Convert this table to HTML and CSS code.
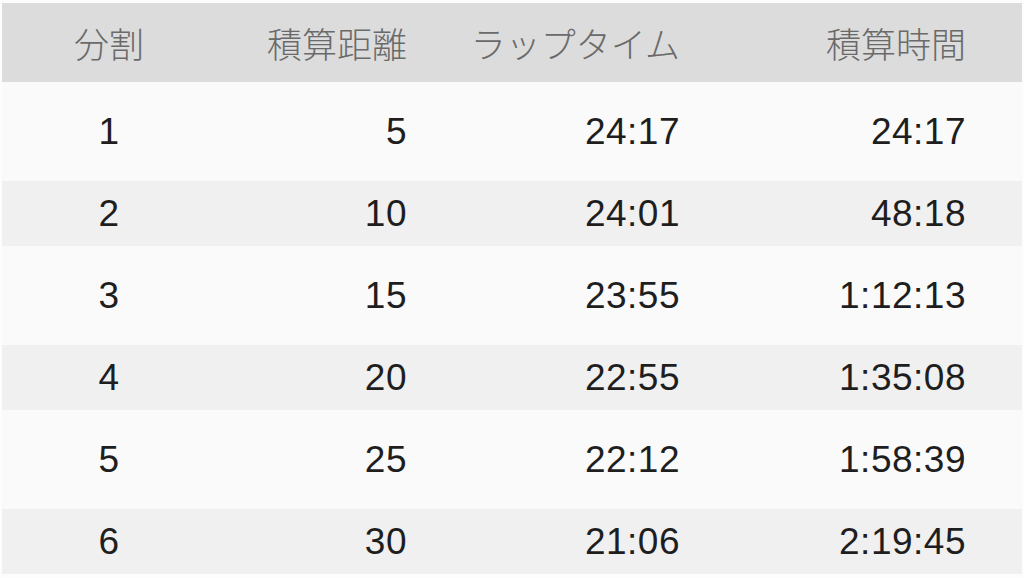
FILE: index.html
```html
<!DOCTYPE html>
<html lang="ja">
<head>
<meta charset="utf-8">
<title>ラップ</title>
<link rel="stylesheet" href="styles.css">
</head>
<body>
<div class="table">
  <div class="row head">
    <div class="c1">分割</div>
    <div class="c2">積算距離</div>
    <div class="c3">ラップタイム</div>
    <div class="c4">積算時間</div>
  </div>
  <div class="row tall">
    <div class="c1">1</div><div class="c2">5</div><div class="c3">24:17</div><div class="c4">24:17</div>
  </div>
  <div class="row short">
    <div class="c1">2</div><div class="c2">10</div><div class="c3">24:01</div><div class="c4">48:18</div>
  </div>
  <div class="row tall">
    <div class="c1">3</div><div class="c2">15</div><div class="c3">23:55</div><div class="c4">1:12:13</div>
  </div>
  <div class="row short">
    <div class="c1">4</div><div class="c2">20</div><div class="c3">22:55</div><div class="c4">1:35:08</div>
  </div>
  <div class="row tall">
    <div class="c1">5</div><div class="c2">25</div><div class="c3">22:12</div><div class="c4">1:58:39</div>
  </div>
  <div class="row short">
    <div class="c1">6</div><div class="c2">30</div><div class="c3">21:06</div><div class="c4">2:19:45</div>
  </div>
</div>
</body>
</html>
```
FILE: styles.css
```css
html, body {
  margin: 0;
  padding: 0;
  background: #fdfdfd;
}
body {
  width: 1024px;
  height: 578px;
  overflow: hidden;
  font-family: "Liberation Sans", "Noto Sans CJK JP", sans-serif;
}
.table {
  margin: 3px 2px 0 2px;
  display: flex;
  flex-direction: column;
}
.row {
  display: grid;
  grid-template-columns: 214px 191px 273px 286px;
  align-items: center;
  color: #1e1e1e;
  font-size: 37px;
  letter-spacing: 0.5px;
}
.row .c1 { text-align: center; }
.row .c2, .row .c3, .row .c4 { text-align: right; }
.head {
  height: 79px;
  background: #dcdcdc;
  color: #6a6a6a;
  font-family: "Noto Sans CJK JP", sans-serif;
  font-size: 35px;
  letter-spacing: 0;
  font-weight: 300;
}
.tall {
  height: 99px;
  background: #fafafa;
}
.short {
  height: 65px;
  background: #f0f0f0;
}
```
